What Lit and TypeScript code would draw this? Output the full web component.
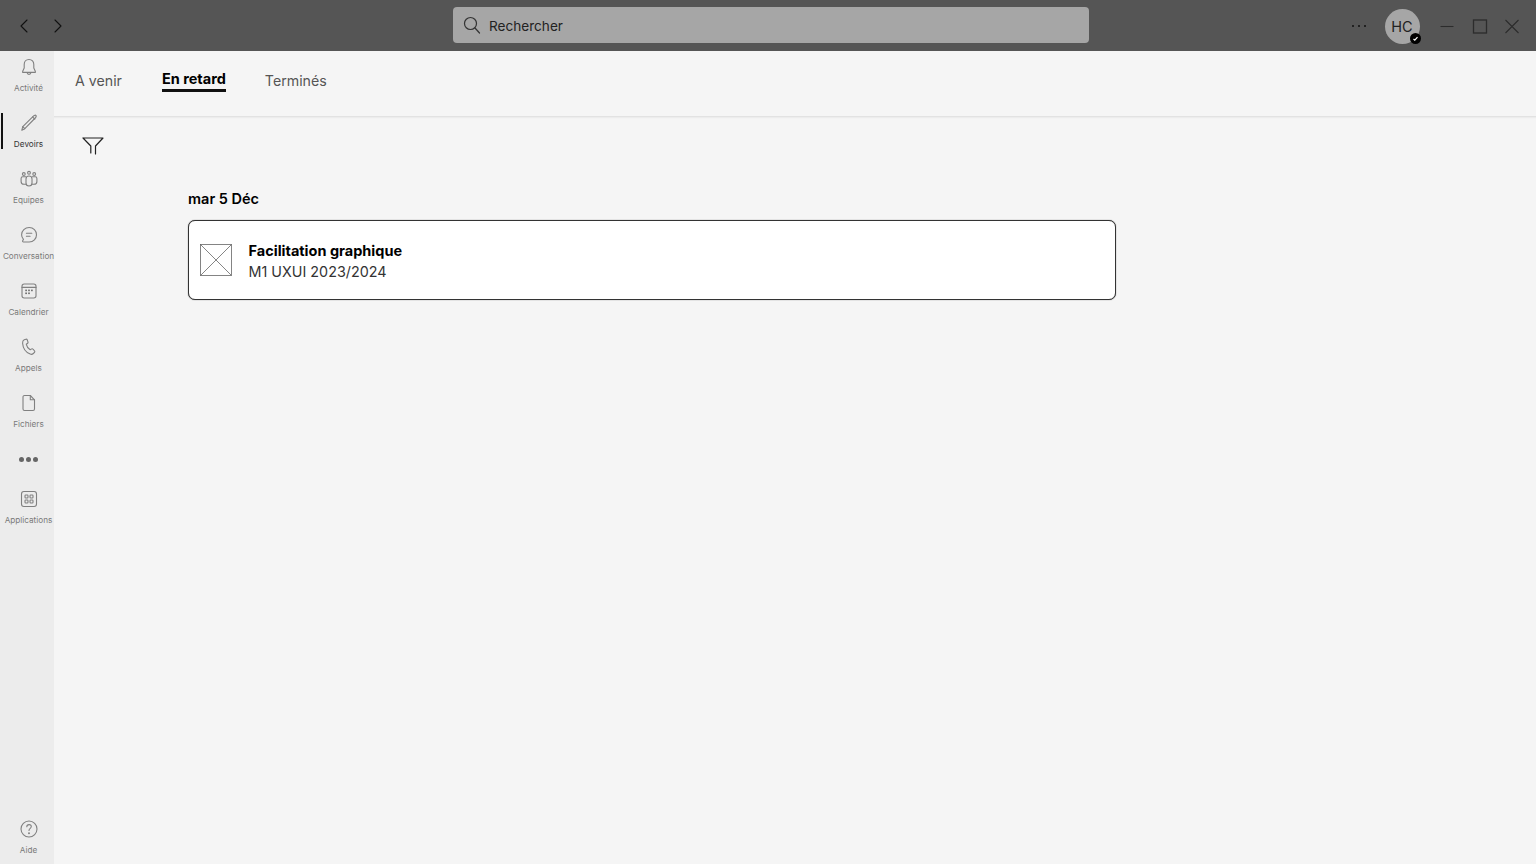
import { LitElement, html, css, svg } from "lit";
import { customElement } from "lit/decorators.js";

const I = (w: number, body: unknown, size = 20, stroke = "#808080") => html`<svg width=${size} height=${size} viewBox="0 0 ${w} ${w}" fill="none" stroke=${stroke} stroke-width="1.1" stroke-linecap="round" stroke-linejoin="round">${body}</svg>`;

const icons = {
  bell: svg`<path d="M10 2.500c-3 0-4.800 2.200-4.800 5v3.600L3.600 14.600c-.2.400 0 .8.500.8h11.800c.5 0 .7-.4.500-.8l-1.600-3.500V7.500c0-2.800-1.800-5-4.800-5Z"/><path d="M8 15.500c.2 1.200 1 1.900 2 1.900s1.800-.7 2-1.900"/>`,
  pencil: svg`<path d="M2.800 17.200 3.800 13.600 14.900 2.700l1.500-.6.9.9-.6 1.500L5.800 15.700Z"/><path d="m13.600 4 2.200 2.200M3.800 13.600l2 2.100"/>`,
  team: svg`<circle cx="4.800" cy="5" r="1.400"/><circle cx="10" cy="3.800" r="1.400"/><circle cx="15.200" cy="5" r="1.400"/><rect x="7" y="7" width="6" height="10" rx="3"/><path d="M7 15.200H5c-1.500 0-2.900-1.200-2.900-2.800V9.400c0-1 .6-1.700 1.600-1.700H7M13 15.200h2c1.500 0 2.900-1.200 2.900-2.800V9.400c0-1-.6-1.700-1.600-1.700H13"/>`,
  chat: svg`<path d="M10.200 2.500c4.200 0 7.300 3.100 7.300 7.200s-3.100 7.300-7.300 7.300H4.500c-.8 0-1.200-.8-.8-1.400l.8-1.300c-1.200-1.200-1.900-2.900-1.900-4.600 0-4.100 3.400-7.200 7.600-7.200Z"/><path d="M7.400 8.300h5.400M7.400 11.200h3.700"/>`,
  cal: svg`<rect x="3" y="3" width="14" height="14" rx="2.200"/><path d="M3 6.400h14"/><g fill="#666" stroke="none"><rect x="6.300" y="8.600" width="1.600" height="1.600"/><rect x="9.200" y="8.600" width="1.600" height="1.600"/><rect x="12.100" y="8.600" width="1.600" height="1.600"/><rect x="6.300" y="11.500" width="1.600" height="1.600"/><rect x="9.200" y="11.500" width="1.600" height="1.600"/></g>`,
  phone: svg`<path d="M5.200 2.700 7 2.200c.6-.1 1 .1 1.200.6l.8 2.300c.2.500 0 .9-.4 1.200L7.300 7.300c.5 2.200 1.900 4.300 3.900 5.500l1.500-.9c.5-.3 1-.2 1.300.2l1.600 1.900c.3.400.3.900-.1 1.300l-1.200 1.200c-.8.800-2 1-3.100.6C7.300 15.600 4 11.400 3.600 6.300c-.1-1.700.4-3.100 1.600-3.600Z"/>`,
  file: svg`<path d="M5.500 2.500h5.800l4.200 4.300v9.200c0 .9-.7 1.500-1.500 1.500H5.500c-.8 0-1.500-.6-1.500-1.500V4c0-.8.7-1.500 1.500-1.500Z"/><path d="M11.300 2.500v4.300h4.200"/>`,
  apps: svg`<rect x="2.500" y="2.500" width="15" height="15" rx="2.400"/><rect x="6" y="6" width="3" height="3" rx=".7"/><rect x="11" y="6" width="3" height="3" rx=".7"/><rect x="6" y="11" width="3" height="3" rx=".7"/><rect x="11" y="11" width="3" height="3" rx=".7"/>`,
  help: svg`<circle cx="10" cy="10" r="8"/><path d="M7.800 7.800c0-1.300 1-2.200 2.300-2.200s2.200.9 2.200 2c0 1.800-2.300 1.800-2.300 3.900"/><circle cx="10" cy="14.200" r=".4" fill="#808080"/>`,
};

const nav = [
  { label: "Activité", icon: icons.bell },
  { label: "Devoirs", icon: icons.pencil, active: true },
  { label: "Equipes", icon: icons.team },
  { label: "Conversation", icon: icons.chat },
  { label: "Calendrier", icon: icons.cal },
  { label: "Appels", icon: icons.phone },
  { label: "Fichiers", icon: icons.file },
];

@customElement("app-root")
export class AppRoot extends LitElement {
  static styles = css`
    :host { display: block; width: 1536px; height: 864px; overflow: hidden; font-family: Inter, "Liberation Sans", sans-serif; background: #f5f5f5; color: #000; }
    svg { display: block; }
    .top { height: 51px; background: #555; display: flex; align-items: center; position: relative; }
    .arrows { display: flex; gap: 13px; padding-left: 15px; width: 453px; box-sizing: border-box; }
    .search { width: 636px; height: 36px; margin-top: -1px; background: #a6a6a6; border-radius: 4px; display: flex; align-items: center; gap: 7px; padding-left: 9px; box-sizing: border-box; font-size: 13.600px; color: #222; }
    .search span { margin-top: 2px; }
    .right { margin-left: auto; display: flex; align-items: center; padding-right: 14px; }
    .more { margin-right: 18px; }
    .avatar { width: 35px; height: 35px; border-radius: 50%; background: #a6a6a6; display: flex; align-items: center; justify-content: center; font-size: 14.500px; color: #222; position: relative; margin-right: 17.500px; margin-top: 1px; }
    .badge { position: absolute; right: -1.500px; bottom: 0; width: 11px; height: 11px; border-radius: 50%; background: #000; display: flex; align-items: center; justify-content: center; }
    .win { display: flex; gap: 12.500px; }
    .body { display: flex; height: 813px; }
    .side { width: 54px; flex: none; background: #ececec; display: flex; flex-direction: column; padding-left: 3px; box-sizing: border-box; }
    .item { height: 56px; position: relative; display: flex; flex-direction: column; align-items: center; box-sizing: border-box; padding-top: 6px; color: #7a7a7a; font-size: 8.200px; line-height: 12px; white-space: nowrap; }
    .item span { margin-top: 4.500px; }
    .item.active { color: #333; }
    .item.active::before { content: ""; position: absolute; left: -2px; top: 6px; width: 2px; height: 36px; background: #111; }
    .dots { height: 40px; display: flex; align-items: flex-start; justify-content: center; padding-top: 14px; box-sizing: border-box; gap: 2px; }
    .dots i { width: 5px; height: 5px; border-radius: 50%; background: #666; }
    .spacer { flex: 1; }
    .item.help { height: 51px; flex: none; }
    main { flex: 1; min-width: 0; }
    .tabs { height: 66px; box-sizing: border-box; border-bottom: 1px solid #e2e2e2; box-shadow: 0 1px 1px #ececec; display: flex; gap: 40px; padding: 20px 0 0 21px; font-size: 14.200px; color: #555; align-items: flex-start; }
    .tabs div { line-height: 20px; }
    .tabs .on { color: #000; font-size: 14.500px; font-weight: 700; margin-top: -2px; border-bottom: 3px solid #111; line-height: 20px; margin-right: -1px; }
    .filter { padding: 17px 0 0 27px; height: 40px; }
    .list { padding: 15px 0 0 134px; }
    h2 { margin: 0 0 11px; font-size: 14.500px; line-height: 20px; font-weight: 600; }
    .card { width: 928px; height: 80px; box-sizing: border-box; border: 1px solid #333; border-radius: 7px; background: #fff; display: flex; align-items: center; padding-left: 11px; gap: 16.500px; box-shadow: 0 0 1px #444; }
    .txt { padding-top: 1px; }
    .t { font-size: 14.500px; font-weight: 700; line-height: 21px; }
    .s { font-size: 14.350px; line-height: 21px; color: #333; }
  `;

  render() {
    return html`
      <div class="top">
        <div class="arrows">
          ${I(20, svg`<path d="M12 4 6 10l6 6"/>`, 20, "#111")}
          ${I(20, svg`<path d="m7 4 6 6-6 6"/>`, 20, "#111")}
        </div>
        <div class="search">
          <svg width="20" height="20" viewBox="0 0 20 20" fill="none" stroke="#333" stroke-width="1.200" stroke-linecap="round"><circle cx="8.500" cy="8.500" r="6"/><path d="m13 13 4.500 5"/></svg>
          <span>Rechercher</span>
        </div>
        <div class="right">
          <svg class="more" width="16" height="4" viewBox="0 0 16 4" fill="#111"><circle cx="2" cy="2" r="1"/><circle cx="8" cy="2" r="1"/><circle cx="14" cy="2" r="1"/></svg>
          <div class="avatar">HC
            <div class="badge"><svg width="7" height="7" viewBox="0 0 7 7" fill="none" stroke="#fff" stroke-width="1.200"><path d="m1.500 4 1.300 1.200 2.700-3"/></svg></div>
          </div>
          <div class="win">
            <svg width="20" height="20" viewBox="0 0 20 20" fill="none" stroke="#2c2c2c" stroke-width="1.100"><path d="M3.500 10.500h13"/></svg>
            <svg width="20" height="20" viewBox="0 0 20 20" fill="none" stroke="#2c2c2c" stroke-width="1.300"><rect x="3.500" y="4" width="13" height="13"/></svg>
            <svg width="20" height="20" viewBox="0 0 20 20" fill="none" stroke="#2c2c2c" stroke-width="1.100"><path d="m3.500 4 13 13M16.500 4l-13 13"/></svg>
          </div>
        </div>
      </div>
      <div class="body">
        <nav class="side">
          ${nav.map((n) => html`<div class="item ${n.active ? "active" : ""}">${I(20, n.icon)}<span>${n.label}</span></div>`)}
          <div class="dots"><i></i><i></i><i></i></div>
          <div class="item">${I(20, icons.apps)}<span>Applications</span></div>
          <div class="spacer"></div>
          <div class="item help">${I(20, icons.help)}<span>Aide</span></div>
        </nav>
        <main>
          <div class="tabs">
            <div>A venir</div>
            <div class="on">En retard</div>
            <div>Terminés</div>
          </div>
          <div class="filter">
            <svg width="24" height="24" viewBox="0 0 24 24" fill="none" stroke="#222" stroke-width="1.200" stroke-linejoin="round" stroke-linecap="round"><path d="M2 4h20l-7.500 8v8M2 4l7.800 8v7"/></svg>
          </div>
          <div class="list">
            <h2>mar 5 Déc</h2>
            <div class="card">
              <svg width="32" height="32" viewBox="0 0 32 32" fill="none" stroke="#666" stroke-width=".8"><rect x=".5" y=".5" width="31" height="31"/><path d="m.5.500 31 31M31.500.500l-31 31"/></svg>
              <div class="txt">
                <div class="t">Facilitation graphique</div>
                <div class="s">M1 UXUI 2023/2024</div>
              </div>
            </div>
          </div>
        </main>
      </div>
    `;
  }
}
